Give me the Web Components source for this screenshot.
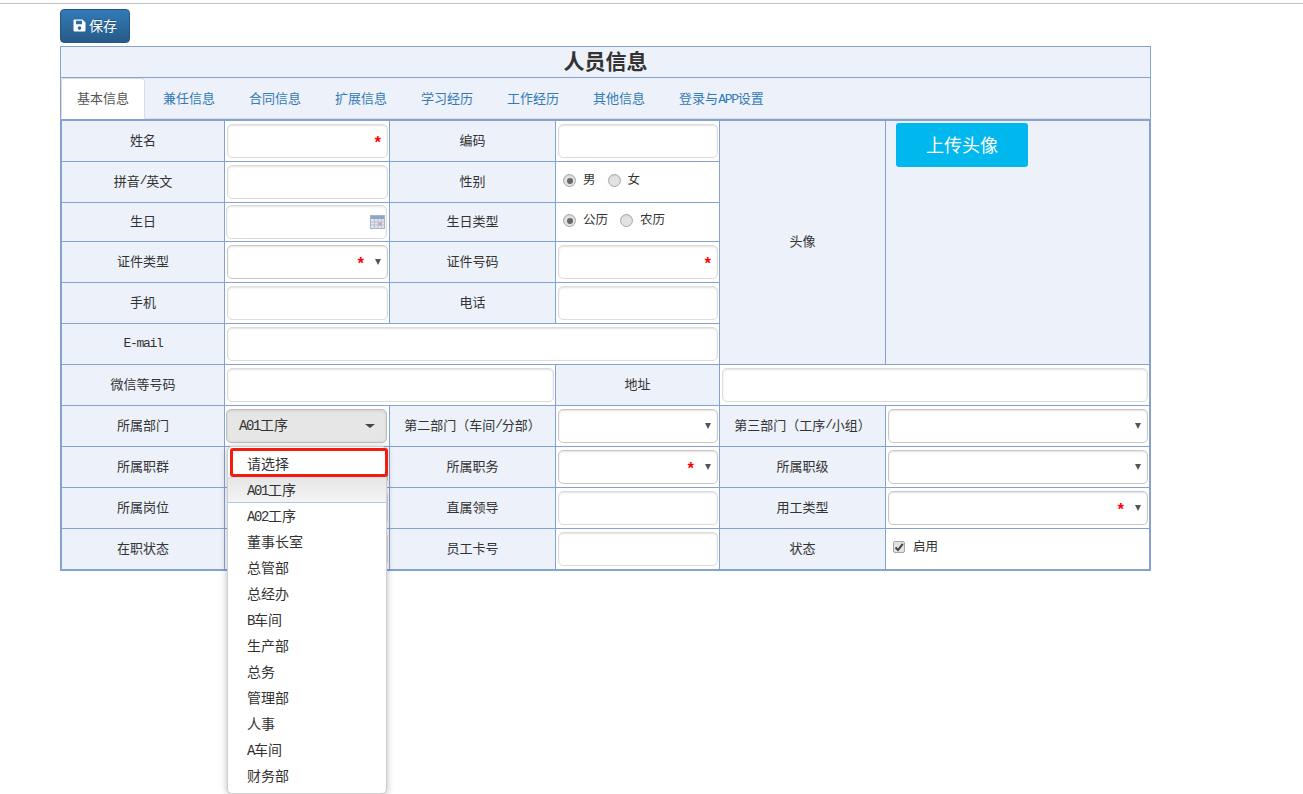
<!DOCTYPE html>
<html lang="zh"><head><meta charset="utf-8"><title>人员信息</title>
<style>
html,body{margin:0;padding:0;background:#fff;height:794px;overflow:hidden}
body{font:13px/18px "Noto Sans CJK SC","Liberation Sans",sans-serif;color:#333}
</style></head><body>
<page-shell>
  <save-button slot="toolbar">保存</save-button>
  <panel-title>人员信息</panel-title>
  <tab-bar>
    <tab-item active>基本信息</tab-item><tab-item>兼任信息</tab-item><tab-item>合同信息</tab-item><tab-item>扩展信息</tab-item><tab-item>学习经历</tab-item><tab-item>工作经历</tab-item><tab-item>其他信息</tab-item><tab-item>登录与<lat-t>APP</lat-t>设置</tab-item>
  </tab-bar>
  <form-grid>
    <f-label>姓名</f-label><f-cell><f-field required></f-field></f-cell>
    <f-label>编码</f-label><f-cell><f-field></f-field></f-cell>
    <f-label tall>头像</f-label>
    <f-cell tall tinted><upload-button>上传头像</upload-button></f-cell>

    <f-label>拼音<lat-t>/</lat-t>英文</f-label><f-cell><f-field></f-field></f-cell>
    <f-label>性别</f-label><f-cell><radio-set><f-radio checked>男</f-radio><f-radio>女</f-radio></radio-set></f-cell>

    <f-label>生日</f-label><f-cell><f-field date></f-field></f-cell>
    <f-label>生日类型</f-label><f-cell><radio-set><f-radio checked>公历</f-radio><f-radio>农历</f-radio></radio-set></f-cell>

    <f-label>证件类型</f-label><f-cell><f-field select required></f-field></f-cell>
    <f-label>证件号码</f-label><f-cell><f-field required></f-field></f-cell>

    <f-label>手机</f-label><f-cell><f-field></f-field></f-cell>
    <f-label>电话</f-label><f-cell><f-field></f-field></f-cell>

    <f-label mono><lat-t>E-mail</lat-t></f-label><f-cell wide3><f-field></f-field></f-cell>

    <f-label>微信等号码</f-label><f-cell wide2><f-field></f-field></f-cell>
    <f-label>地址</f-label><f-cell wide2><f-field></f-field></f-cell>

    <f-label>所属部门</f-label>
    <f-cell><f-field select open><lat-t>A01</lat-t>工序
      <drop-list slot="menu">
        <drop-item>请选择</drop-item>
        <drop-item current><lat-t>A01</lat-t>工序</drop-item>
        <drop-item><lat-t>A02</lat-t>工序</drop-item>
        <drop-item>董事长室</drop-item>
        <drop-item>总管部</drop-item>
        <drop-item>总经办</drop-item>
        <drop-item><lat-t>B</lat-t>车间</drop-item>
        <drop-item>生产部</drop-item>
        <drop-item>总务</drop-item>
        <drop-item>管理部</drop-item>
        <drop-item>人事</drop-item>
        <drop-item><lat-t>A</lat-t>车间</drop-item>
        <drop-item>财务部</drop-item>
      </drop-list>
    </f-field></f-cell>
    <f-label>第二部门（车间<lat-t>/</lat-t>分部）</f-label><f-cell><f-field select></f-field></f-cell>
    <f-label>第三部门（工序<lat-t>/</lat-t>小组）</f-label><f-cell><f-field select></f-field></f-cell>

    <f-label>所属职群</f-label><f-cell><f-field select></f-field></f-cell>
    <f-label>所属职务</f-label><f-cell><f-field select required></f-field></f-cell>
    <f-label>所属职级</f-label><f-cell><f-field select></f-field></f-cell>

    <f-label>所属岗位</f-label><f-cell><f-field></f-field></f-cell>
    <f-label>直属领导</f-label><f-cell><f-field></f-field></f-cell>
    <f-label>用工类型</f-label><f-cell><f-field select required></f-field></f-cell>

    <f-label>在职状态</f-label><f-cell><f-field></f-field></f-cell>
    <f-label>员工卡号</f-label><f-cell><f-field></f-field></f-cell>
    <f-label>状态</f-label><f-cell><f-check>启用</f-check></f-cell>
  </form-grid>
</page-shell>
<script>
const FONT='"Noto Sans CJK SC","Liberation Sans",sans-serif';
const LINE='#84a2d4', TINT='#edf1fa';
function def(name,html){
  customElements.define(name,class extends HTMLElement{
    constructor(){super();this.attachShadow({mode:'open'}).innerHTML=html;}
  });
}
def('lat-t',`<style>:host{display:inline;font-family:"Liberation Mono",monospace;letter-spacing:-.1em}</style><slot></slot>`);

def('page-shell',`<style>
:host{display:block}
.rule{height:1px;margin-top:3px;background:#c2c2c2}
.bar{display:flex;padding:5px 0 3px 60px}
.panel{width:1091px;margin-left:60px;display:flex;flex-direction:column}
</style><div class="rule"></div><div class="bar"><slot name="toolbar"></slot></div><div class="panel"><slot></slot></div>`);

def('save-button',`<style>
:host{display:inline-flex;align-items:center;gap:3px;box-sizing:border-box;width:70px;height:34px;padding:0 0 2px 12px;border:1px solid #245580;border-radius:4px;background:linear-gradient(#337ab7,#265a88);color:#fff;font:14px/20px ${FONT};text-shadow:0 -1px 0 rgba(0,0,0,.2)}
svg{width:13px;height:13px;display:block}
</style><svg viewBox="0 0 13 13"><path fill="#fff" fill-rule="evenodd" d="M1.500 0.500h8L12.500 3.500v8a1 1 0 0 1-1 1h-10a1 1 0 0 1-1-1v-10a1 1 0 0 1 1-1zM3 1.800V5.200h6V1.800zM6.500 7.300a1.800 1.800 0 1 0 0 3.600 1.800 1.800 0 0 0 0-3.600z"/></svg><slot></slot>`);

def('panel-title',`<style>
:host{display:block;box-sizing:border-box;height:32px;border:1px solid ${LINE};background:${TINT};text-align:center;font:700 21px/26px ${FONT};color:#333}
</style><slot></slot>`);

def('tab-bar',`<style>
:host{display:flex;gap:2px;box-sizing:border-box;height:41px;border-left:1px solid ${LINE};border-right:1px solid ${LINE};border-bottom:1px solid #ddd;background:${TINT}}
</style><slot></slot>`);

def('tab-item',`<style>
:host{display:block;box-sizing:border-box;height:41px;padding:9px 15px;border:1px solid transparent;border-radius:4px 4px 0 0;font:13px/20px ${FONT};color:#337ab7;white-space:nowrap}
:host([active]){background:#fff;border-color:#ddd #ddd #fff;color:#555}
</style><slot></slot>`);

def('form-grid',`<style>
:host{display:grid;grid-template-columns:162px 164px 165px 163px 165px 263px;grid-template-rows:40px 40px 38px repeat(8,40px);gap:1px;box-sizing:border-box;width:1091px;border:2px solid ${LINE};background:${LINE}}
</style><slot></slot>`);

def('f-label',`<style>
:host{display:flex;align-items:center;justify-content:center;box-sizing:border-box;padding:0 0 3px 0;background:${TINT};font:13px/18px ${FONT};color:#333;white-space:nowrap}
:host([tall]){grid-row:span 6}
:host([mono]){padding:0}
</style><slot></slot>`);

def('f-cell',`<style>
:host{display:flex;flex-direction:column;justify-content:center;box-sizing:border-box;padding:0 1px 0 2px;background:#fff;min-width:0}
:host([wide2]){grid-column:span 2}
:host([wide3]){grid-column:span 3}
:host([tall]){grid-row:span 6;justify-content:flex-start;padding:2px 10px}
:host([tinted]){background:${TINT}}
</style><slot></slot>`);

class FField extends HTMLElement{
  constructor(){
    super();
    this.attachShadow({mode:'open'}).innerHTML=`<style>
:host{display:block;position:relative;box-sizing:border-box;height:34px;border:1px solid #dcdcdc;border-radius:5px;background:#fff;box-shadow:inset 0 1px 2px rgba(0,0,0,.12);font:14px/29px ${FONT};color:#333}
:host([select]){border-color:#c9c9c9}
:host([open]){margin:0 1px 0 -1px;border-color:#bdbdbd;background:#e6e6e6;padding-left:12px;box-shadow:inset 0 1px 3px rgba(0,0,0,.1)}
:host([date]){margin:0 1px 0 -1px}
.star{display:none;position:absolute;right:5px;top:10px;width:9px;height:16px;color:#f00;font:700 16px/19px "Liberation Mono",monospace;text-align:center}
:host([required]) .star{display:block}
:host([select][required]) .star{right:22px}
.arrow{display:none;position:absolute;right:6px;top:13px;width:0;height:0;border-left:3.500px solid transparent;border-right:3.500px solid transparent;border-top:6px solid #555}
:host([select]) .arrow{display:block}
:host([open]) .arrow{right:11px;top:14px;border-left-width:5px;border-right-width:5px;border-top-width:4px;border-top-color:#444}
.cal{display:none;position:absolute;right:1px;top:9px;width:15px;height:14px}
:host([date]) .cal{display:block}
</style><slot></slot><span class="star">*</span><span class="arrow"></span>
<svg class="cal" viewBox="0 0 15 14"><rect x=".5" y=".5" width="14" height="13" fill="#dfe6f0" stroke="#a9b5c6"/><rect x="1" y="1" width="13" height="3" fill="#8ea6c6"/><path d="M1 7h13M1 10h13M4.500 4v9M8 4v9M11.500 4v9" stroke="#b7c3d4" fill="none"/><rect x="8.500" y="7.500" width="3" height="3" fill="#eb9c96"/></svg>
<slot name="menu"></slot>`;
  }
}
customElements.define('f-field',FField);

def('drop-list',`<style>
:host{display:block;position:absolute;left:0;top:36px;z-index:10;box-sizing:border-box;width:160px;height:348px;padding:4px 0;border:1px solid #cfcfcf;border-radius:5px;background:#fff;box-shadow:0 1px 7px rgba(0,0,0,.28);line-height:25px}
.mark{position:absolute;left:2px;top:1px;box-sizing:border-box;width:158px;height:29px;border:3px solid #f31c0d;border-radius:3px}
</style><slot></slot><div class="mark"></div>`);

def('drop-item',`<style>
:host{display:block;box-sizing:border-box;height:26px;padding-left:19px;font:14px/25px ${FONT};color:#333;background:#fff}
:host([current]){background:linear-gradient(#e6e6e6,#f4f4f4);border-bottom:1px solid #a9c8f0;border-top:1px solid #cdddf2;line-height:23px}
</style><slot></slot>`);

def('upload-button',`<style>
:host{display:flex;align-items:center;justify-content:center;box-sizing:border-box;width:132px;height:44px;padding-bottom:2px;border-radius:3px;background:#00b7ee;color:#fff;font:18px/24px ${FONT}}
</style><slot></slot>`);

def('radio-set',`<style>
:host{display:flex;gap:12px;padding-left:5px;margin-top:-3px}
</style><slot></slot>`);

def('f-radio',`<style>
:host{display:inline-flex;align-items:center;gap:7px;font:12.5px/18px ${FONT};color:#333}
i{display:block;box-sizing:border-box;width:13px;height:13px;border:1px solid #a8a8a8;border-radius:50%;background:#e2e2e2;position:relative;box-shadow:inset 0 1px 1px rgba(0,0,0,.08)}
:host([checked]) i::after{content:"";position:absolute;left:2.500px;top:2.500px;width:6px;height:6px;border-radius:50%;background:#666}
span{display:block;margin-bottom:3px}
</style><i></i><span><slot></slot></span>`);

def('f-check',`<style>
:host{display:inline-flex;align-items:center;gap:8px;padding-left:5px;margin-top:-5px;font:12.5px/18px ${FONT};color:#333}
i{display:block;box-sizing:border-box;width:12px;height:12px;border:1px solid #a8a8a8;border-radius:2px;background:#e2e2e2}
svg{display:block;width:10px;height:10px}
span{display:block;margin-bottom:2px}
</style><i><svg viewBox="0 0 10 10"><path d="M1.500 5.500 4 8 8.800 1.800" fill="none" stroke="#444" stroke-width="2"/></svg></i><span><slot></slot></span>`);
</script></body></html>
